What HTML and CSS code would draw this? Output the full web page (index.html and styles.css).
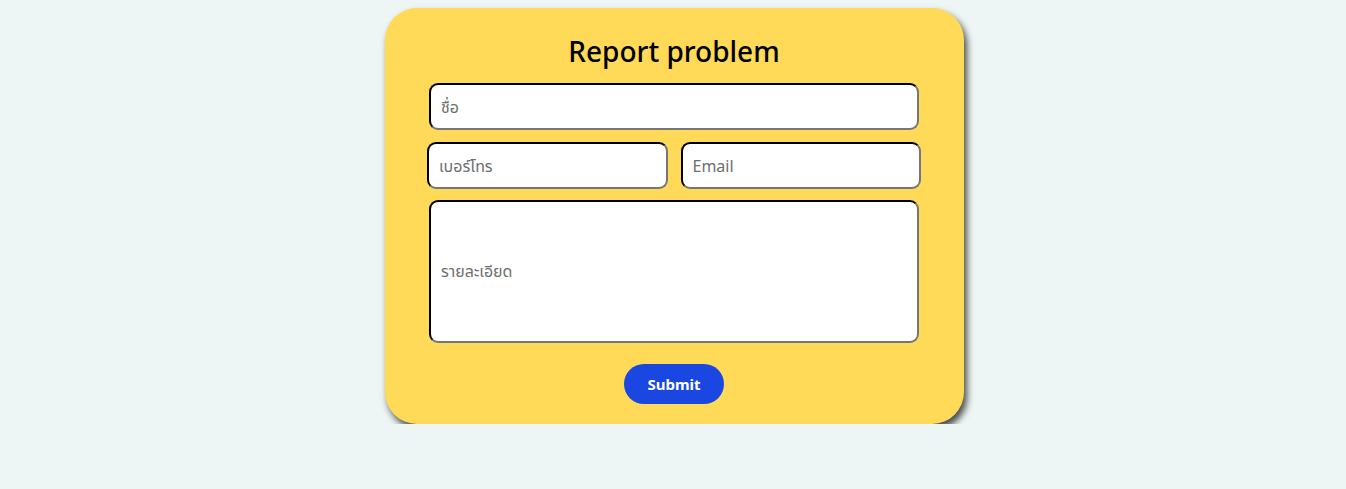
FILE: index.html
```html
<!DOCTYPE html>
<html lang="th">
<head>
<meta charset="utf-8">
<title>Report problem</title>
<link rel="stylesheet" href="styles.css">
</head>
<body>
<form class="card">
  <h1 class="title">Report problem</h1>
  <input class="field" type="text" placeholder="ชื่อ">
  <div class="row">
    <input class="field" type="text" placeholder="เบอร์โทร">
    <input class="field" type="text" placeholder="Email">
  </div>
  <div class="area"><span class="ph">รายละเอียด</span></div>
  <div class="actions"><button class="submit" type="button">Submit</button></div>
</form>
</body>
</html>
```
FILE: styles.css
```css
html, body { margin: 0; padding: 0; }
body {
  background: #edf6f4;
  font-family: "Noto Sans", "Noto Sans Thai", "Open Sans", sans-serif;
  padding: 8px 0 0 3px;
}
.card {
  box-sizing: border-box;
  width: 579px;
  margin: 0 auto;
  background: #ffda58;
  border-radius: 32px;
  padding: 25px 45px 20px 44px;
  box-shadow: 3px 5px 7px rgba(0, 0, 0, 0.7);
  display: flex;
  flex-direction: column;
}
.title {
  margin: 0 0 14px;
  text-align: center;
  font-size: 28px;
  line-height: 36px;
  font-weight: 500;
  color: #000;
}
.field {
  box-sizing: border-box;
  height: 47px;
  width: 100%;
  border: 2px inset #767676;
  border-top-color: #222;
  border-left-color: #222;
  border-radius: 9px;
  background: #fff;
  padding: 0 10px;
  font-family: inherit;
  font-size: 16px;
  color: #333;
}
.field::placeholder { color: #6e6e6e; }
.row {
  display: flex;
  gap: 13px;
  margin: 12px -2px 11px;
}
.row .field { flex: 1; width: auto; min-width: 0; }
.area {
  box-sizing: border-box;
  height: 143px;
  border: 2px inset #767676;
  border-top-color: #222;
  border-left-color: #222;
  border-radius: 9px;
  background: #fff;
  padding: 0 10px;
  display: flex;
  align-items: center;
}
.ph { color: #6e6e6e; font-size: 16px; }
.actions {
  display: flex;
  justify-content: center;
  margin-top: 21px;
}
.submit {
  width: 100px;
  height: 40px;
  border: none;
  border-radius: 20px;
  background: #1a47e2;
  color: #fff;
  font-family: inherit;
  font-size: 15px;
  font-weight: 700;
}
```
